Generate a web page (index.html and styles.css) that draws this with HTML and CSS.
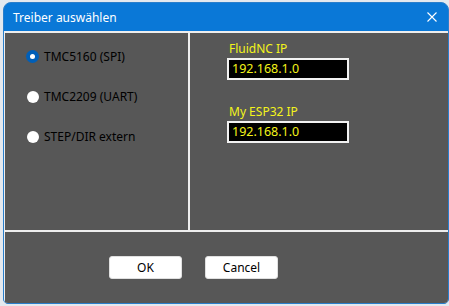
FILE: index.html
```html
<!DOCTYPE html>
<html lang="de">
<head>
    <meta charset="UTF-8">
    <title>Treiber auswählen</title>
    <link rel="stylesheet" href="styles.css">
</head>
<body>
    <div class="window">
        <div class="titlebar">
            <span class="title">Treiber auswählen</span>
            <svg class="close" width="10" height="10" viewBox="0 0 10 10">
                <path d="M0.5 0.5 L9.5 9.5 M9.5 0.5 L0.5 9.5" stroke="#fff" stroke-width="1.1" fill="none"/>
            </svg>
        </div>
        <div class="content">
            <div class="panel drivers">
                <label class="radio checked"><span class="dot"></span>TMC5160 (SPI)</label>
                <label class="radio"><span class="dot"></span>TMC2209 (UART)</label>
                <label class="radio"><span class="dot"></span>STEP/DIR extern</label>
            </div>
            <div class="panel network">
                <div class="field">
                    <div class="field-label">FluidNC IP</div>
                    <div class="input">192.168.1.0</div>
                </div>
                <div class="field">
                    <div class="field-label">My ESP32 IP</div>
                    <div class="input">192.168.1.0</div>
                </div>
            </div>
            <div class="panel footer">
                <button>OK</button>
                <button>Cancel</button>
            </div>
        </div>
    </div>
</body>
</html>
```

FILE: styles.css
```css
:root {
    --title: #0a78d7;
    --panel: #575757;
    --line: #eeeeee;
    --yellow: #f4f41a;
}

* {
    margin: 0;
    padding: 0;
    box-sizing: border-box;
    font-family: 'Noto Sans', 'Open Sans', sans-serif;
}

body {
    width: 449px;
    height: 306px;
    overflow: hidden;
    background: #e4e9ef;
}

.window {
    margin: 2px 0 0 3px;
    width: 446px;
    height: 302px;
    display: flex;
    flex-direction: column;
    background: var(--title);
    border: 1px solid #2a7fcc;
    border-radius: 8px 8px 5px 5px;
    overflow: hidden;
}

.titlebar {
    height: 28px;
    flex-shrink: 0;
    display: flex;
    align-items: center;
    justify-content: space-between;
    padding: 0 10px 0 9px;
    color: #fff;
    font-size: 12px;
}

.close {
    margin-right: 1px;
}

.content {
    flex: 1;
    display: grid;
    grid-template-columns: 183px 1fr;
    grid-template-rows: 197px 1fr;
    gap: 2px;
    padding: 2px 0 0 1px;
    background: var(--line);
}

.panel {
    background: var(--panel);
}

.drivers {
    display: flex;
    flex-direction: column;
    gap: 27px;
    padding: 17px 0 0 22px;
}

.radio {
    display: flex;
    align-items: center;
    height: 13px;
    color: #000;
    font-size: 12px;
}

.dot {
    width: 12px;
    height: 12px;
    margin-right: 5px;
    border-radius: 50%;
    background: #fff;
}

.radio.checked .dot {
    width: 13px;
    height: 13px;
    margin-left: -1px;
    background: #005fb8;
    display: flex;
    align-items: center;
    justify-content: center;
}

.radio.checked .dot::after {
    content: "";
    width: 5px;
    height: 5px;
    border-radius: 50%;
    background: #fff;
}

.network {
    padding: 7px 0 0 37px;
    display: flex;
    flex-direction: column;
    gap: 23px;
}

.field-label {
    color: var(--yellow);
    font-size: 12px;
    line-height: 17px;
    padding-left: 2px;
}

.input {
    width: 122px;
    height: 22px;
    margin-top: 1px;
    padding-left: 3px;
    background: #000;
    border: 2px solid #f2f2f2;
    color: var(--yellow);
    font-size: 12.5px;
    line-height: 18px;
}

.footer {
    grid-column: span 2;
    display: flex;
    gap: 23px;
    padding: 24px 0 0 104px;
}

button {
    width: 73px;
    height: 23px;
    background: #fff;
    border: 1px solid #e0e0e0;
    border-radius: 3px;
    color: #000;
    font-size: 12px;
}
```
